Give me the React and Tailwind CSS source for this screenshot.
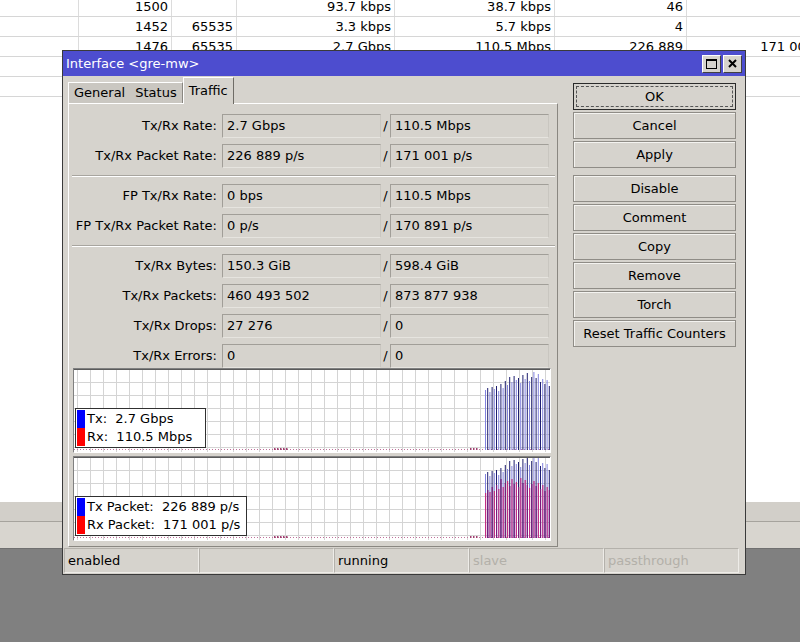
import React from 'react';

const tableRows = [
  ['', '1500', '', '93.7 kbps', '38.7 kbps', '46', ''],
  ['', '1452', '65535', '3.3 kbps', '5.7 kbps', '4', ''],
  ['', '1476', '65535', '2.7 Gbps', '110.5 Mbps', '226 889', '171 001'],
  ['', '', '', '', '', '', ''],
  ['', '', '', '', '', '', ''],
];
const colWidths = ['w-[79px]', 'w-[93px]', 'w-[65px]', 'w-[158px]', 'w-[160px]', 'w-[132px]', 'w-[131px]'];

const groups = [
  [
    ['Tx/Rx Rate:', '2.7 Gbps', '110.5 Mbps'],
    ['Tx/Rx Packet Rate:', '226 889 p/s', '171 001 p/s'],
  ],
  [
    ['FP Tx/Rx Rate:', '0 bps', '110.5 Mbps'],
    ['FP Tx/Rx Packet Rate:', '0 p/s', '170 891 p/s'],
  ],
  [
    ['Tx/Rx Bytes:', '150.3 GiB', '598.4 GiB'],
    ['Tx/Rx Packets:', '460 493 502', '873 877 938'],
    ['Tx/Rx Drops:', '27 276', '0'],
    ['Tx/Rx Errors:', '0', '0'],
  ],
];

// bar tops (px from top of plot) for the traffic burst at the right edge
const rateTops = [21, 19, 23, 18, 20, 17, 22, 15, 19, 12, 16, 8, 13, 7, 11, 9, 14, 6, 10, 4, 12, 8, 3, 9, 5, 13, 10, 15, 11, 17];
const pktTops = rateTops.map((t) => Math.max(1, t - 4));
const pktRedTops = [36, 33, 35, 30, 34, 28, 32, 22, 30, 26, 24, 29, 22, 27, 25, 30, 21, 26, 23, 28, 31, 27, 24, 29, 26, 32, 28, 34, 30, 33];

function Field({ children, w = 'w-[159px]' }) {
  return (
    <div className={`${w} h-[24px] border border-[#a19e98] border-b-[#e6e4df] border-r-[#c9c6c0] bg-[#d6d3cd] flex items-center pl-[4px]`}>
      {children}
    </div>
  );
}

function Separator() {
  return <div className="h-[2px] border-t border-[#a8a59f] border-b border-b-white mr-[2px] -ml-[1px] my-[7px]" />;
}

function Graph({ height, tops, redTops, legend, legendWidth }) {
  const w = 476;
  const h = height - 2;
  const base = h - 3;
  const vLines = [];
  for (let x = 3; x < w; x += 13) vLines.push(x);
  const hLines = [];
  for (let y = 13; y < h; y += 13) hLines.push(y);
  return (
    <div className="relative w-[478px] bg-white border border-[#808080] border-b-white border-r-white" style={{ height }}>
      <svg width={w} height={h} className="block">
        {vLines.map((x) => (
          <line key={'v' + x} x1={x + 0.5} y1={0} x2={x + 0.5} y2={h} stroke="#d4d4d4" strokeWidth="1" />
        ))}
        {hLines.map((y) => (
          <line key={'h' + y} x1={0} y1={y + 0.5} x2={w} y2={y + 0.5} stroke="#d4d4d4" strokeWidth="1" />
        ))}
        <line x1={0} y1={base + 0.5} x2={w} y2={base + 0.5} stroke="#c0709a" strokeWidth="1" strokeDasharray="1 2" />
        <line x1={0} y1={0.5} x2={w} y2={0.5} stroke="#5a5a5a" strokeWidth="1" />
        {[200, 203, 206, 209, 212, 396, 399, 402].map((x) => (
          <rect key={'b' + x} x={x} y={base - 1} width={1.5} height={2} fill="#a04070" />
        ))}
        {tops.map((t, i) => (
          <rect
            key={'t' + i}
            x={411 + i * 2.2}
            y={t}
            width={1}
            height={base - t + 1}
            fill={i % 2 ? '#1e1e70' : '#8282de'}
          />
        ))}
        {redTops &&
          redTops.map((t, i) => (
            <rect key={'r' + i} x={411 + i * 2.2} y={t} width={1.2} height={base - t + 1} fill={i % 2 ? '#7a1a7e' : '#c22e84'} />
          ))}
      </svg>
      <div
        className="absolute left-[1px] bottom-[4px] bg-white border border-[#303030] flex"
        style={{ width: legendWidth }}
      >
        <div className="flex flex-col pl-[1px] py-[1px]">
          <div className="w-[8px] h-[18px] bg-[#0000ff]" />
          <div className="w-[8px] h-[18px] bg-[#ff0000]" />
        </div>
        <div className="flex flex-col pl-[2px] py-[1px] leading-[18px] whitespace-pre">
          <div>{legend[0]}</div>
          <div>{legend[1]}</div>
        </div>
      </div>
    </div>
  );
}

function Btn({ children, primary }) {
  if (primary) {
    return (
      <div className="h-[27px] border border-[#2a2a2a] bg-[#d6d3cd] p-[2px]">
        <div className="h-full border border-dashed border-[#555] flex items-center justify-center">{children}</div>
      </div>
    );
  }
  return (
    <div className="h-[27px] border border-[#8f8c86] bg-[#d6d3cd] shadow-[inset_1px_1px_0_#f4f3f0] flex items-center justify-center">
      {children}
    </div>
  );
}

export default function App() {
  return (
    <div className="relative w-[800px] h-[642px] overflow-hidden bg-[#808080] text-[13px] text-black font-['DejaVu_Sans',sans-serif]">
      {/* background window */}
      <div className="h-[502px] bg-white overflow-hidden">
        <div className="-mt-[3px]">
          {tableRows.map((row, r) => (
            <div key={r} className="flex h-[20px] border-b border-[#d6d6d6]">
              {row.map((c, i) => (
                <div
                  key={i}
                  className={`${colWidths[i]} shrink-0 h-full border-r border-[#dcdcdc] text-right pr-[3px] leading-[20px] whitespace-nowrap`}
                >
                  {c}
                </div>
              ))}
            </div>
          ))}
        </div>
      </div>
      <div className="h-[20px] bg-[#d2cfc9] border-b border-[#a6a39d]" />
      <div className="h-[27px] bg-[#d8d5cf] border-b border-[#707070]" />

      {/* dialog */}
      <div className="absolute left-[62px] top-[50px] w-[684px] h-[525px] bg-[#d6d3cd] border border-[#3a3a3a] flex flex-col">
        <div className="h-[25px] bg-[#4d4dcf] flex items-center pl-[3px] pr-[3px] shrink-0">
          <span className="text-white text-[13px] whitespace-pre">Interface &lt;gre-mw&gt;</span>
          <div className="ml-auto flex gap-[2px]">
            <div className="w-[19px] h-[18px] bg-[#d6d3cd] border border-white border-r-[#404040] border-b-[#404040] flex items-center justify-center">
              <svg width="11" height="10" viewBox="0 0 11 10">
                <rect x="0.5" y="0.5" width="10" height="9" fill="none" stroke="#000" />
                <rect x="0" y="0" width="11" height="2" fill="#000" />
              </svg>
            </div>
            <div className="w-[19px] h-[18px] bg-[#d6d3cd] border border-white border-r-[#404040] border-b-[#404040] flex items-center justify-center">
              <svg width="9" height="9" viewBox="0 0 9 9">
                <path d="M1 1 L8 8 M8 1 L1 8" stroke="#000" strokeWidth="2" />
              </svg>
            </div>
          </div>
        </div>

        <div className="flex pl-[5px] pt-[1px] h-[472px] shrink-0">
          {/* left column */}
          <div className="w-[490px] flex flex-col">
            <div className="h-[26px] flex items-end relative z-10">
              <div className="h-[21px] px-[5px] flex items-center bg-[#cac7c1] border-t border-l border-white">General</div>
              <div className="h-[21px] px-[5px] flex items-center bg-[#cac7c1] border-t border-white border-r border-r-[#8a8781]">Status</div>
              <div className="h-[27px] -mb-[1px] px-[5px] flex items-start pt-[3px] bg-[#d6d3cd] border-t border-l border-white border-r border-r-[#6f6c66]">
                Traffic
              </div>
            </div>
            <div className="h-[444px] border border-white border-r-[#8a8781] border-b-[#8a8781] pl-[4px] pt-[10px]">
              {groups.map((g, gi) => (
                <div key={gi}>
                  {gi > 0 && <Separator />}
                  <div className="flex flex-col gap-[6px]">
                    {g.map(([label, a, b]) => (
                      <div key={label} className="flex items-center h-[24px]">
                        <div className="w-[144px] text-right whitespace-nowrap">{label}</div>
                        <div className="w-[5px]" />
                        <Field>{a}</Field>
                        <div className="w-[9px] text-center">/</div>
                        <Field>{b}</Field>
                      </div>
                    ))}
                  </div>
                </div>
              ))}
              <div className="flex flex-col gap-[3px]">
                <Graph height={85} tops={rateTops} legend={['Tx:  2.7 Gbps', 'Rx:  110.5 Mbps']} legendWidth={131} />
                <Graph
                  height={85}
                  tops={pktTops}
                  redTops={pktRedTops}
                  legend={['Tx Packet:  226 889 p/s', 'Rx Packet:  171 001 p/s']}
                  legendWidth={172}
                />
              </div>
            </div>
          </div>

          {/* right column */}
          <div className="w-[163px] ml-[15px] pt-[6px] flex flex-col">
            <div className="flex flex-col gap-[2px]">
              <Btn primary>OK</Btn>
              <Btn>Cancel</Btn>
              <Btn>Apply</Btn>
            </div>
            <div className="flex flex-col gap-[2px] mt-[7px]">
              <Btn>Disable</Btn>
              <Btn>Comment</Btn>
              <Btn>Copy</Btn>
              <Btn>Remove</Btn>
              <Btn>Torch</Btn>
              <Btn>Reset Traffic Counters</Btn>
            </div>
          </div>
        </div>

        {/* status bar */}
        <div className="flex ml-[1px] h-[25px] shrink-0">
          {[
            ['enabled', false],
            ['', false],
            ['running', false],
            ['slave', true],
            ['passthrough', true],
          ].map(([t, dim], i) => (
            <div
              key={i}
              className={`w-[135px] h-full border border-[#b4b1ab] border-r-[#eeece8] border-b-[#eeece8] flex items-center pl-[3px] ${
                dim ? 'text-[#b3b0a9]' : ''
              }`}
            >
              {t}
            </div>
          ))}
        </div>
      </div>
    </div>
  );
}
